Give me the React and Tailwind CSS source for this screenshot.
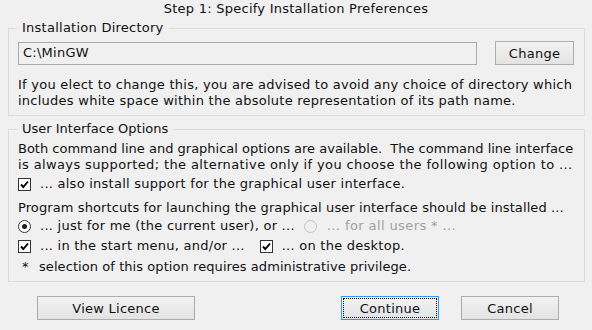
import { useState } from "react";

// kwadratowy checkbox w stylu Win32
function Check({ checked = true }) {
  return (
    <span className="inline-flex w-[13px] h-[13px] shrink-0 items-center justify-center border border-[#333333] bg-white">
      {checked && (
        <svg width="11" height="11" viewBox="0 0 11 11">
          <path d="M2 5.5 L4.3 8 L9 2.5" fill="none" stroke="#000" strokeWidth="1.9" />
        </svg>
      )}
    </span>
  );
}

function Radio({ checked, disabled }) {
  return (
    <span
      className={[
        "inline-flex w-[13px] h-[13px] shrink-0 items-center justify-center rounded-full border",
        disabled ? "border-[#c4c4c4] bg-[#f0f0f0]" : "border-[#333333] bg-white",
      ].join(" ")}
    >
      {checked && <span className="w-[5px] h-[5px] rounded-full bg-[#1a1a1a]" />}
    </span>
  );
}

function Button({ children, className = "", focused }) {
  return (
    <button
      className={[
        "h-[24px] flex items-center justify-center border bg-gradient-to-b from-[#f2f2f2] to-[#e3e3e3] text-[13px] leading-none",
        focused ? "border-[#3399ff] p-[1px]" : "border-[#adadad]",
        className,
      ].join(" ")}
    >
      {focused ? (
        <span className="w-full h-full flex items-center justify-center border border-dotted border-black">
          {children}
        </span>
      ) : (
        children
      )}
    </button>
  );
}

export default function App() {
  const [dir] = useState("C:\\MinGW");

  return (
    <div
      className="w-[592px] h-[330px] bg-[#f0f0f0] text-[#111] text-[13px] leading-[16px] tracking-[0.25px] overflow-hidden whitespace-nowrap"
      style={{ fontFamily: '"DejaVu Sans", Verdana, sans-serif' }}
    >
      <div className="h-[20px] pt-[1px] text-center">Step 1: Specify Installation Preferences</div>

      {/* Installation Directory */}
      <fieldset className="ml-[8px] mr-[7px] border border-[#dcdcdc] pl-[9px] pr-[10px] pb-[6px] min-w-0">
        <legend className="-ml-[1px] px-[5px] leading-[16px]">Installation Directory</legend>
        <div className="flex items-center justify-between mt-[5px]">
          <div className="w-[459px] h-[23px] border border-[#a9a9a9] bg-[#f0f0f0] flex items-center pl-[4px]">
            {dir}
          </div>
          <Button className="w-[79px]">Change</Button>
        </div>
        <p className="mt-[12px]">
          If you elect to change this, you are advised to avoid any choice of directory which
          <br />
          includes white space within the absolute representation of its path name.
        </p>
      </fieldset>

      {/* User Interface Options */}
      <fieldset className="mt-[5px] ml-[8px] mr-[7px] border border-[#dcdcdc] pl-[9px] pr-[4px] pb-[6px] min-w-0">
        <legend className="-ml-[1px] px-[5px] leading-[16px] tracking-[0px]">User Interface Options</legend>
        <div className="mt-[4px]">
          <div className="tracking-[0px]">
            Both command line and graphical options are available.&nbsp; The command line interface
          </div>
          <div className="tracking-[0.38px]">
            is always supported; the alternative only if you choose the following option to ...
          </div>
        </div>
        <div className="flex items-center gap-[9px] mt-[3px] h-[16px]">
          <Check />
          <span>... also install support for the graphical user interface.</span>
        </div>
        <p className="mt-[8px] tracking-[0.1px]">
          Program shortcuts for launching the graphical user interface should be installed ...
        </p>
        <div className="flex items-center mt-[2px] h-[16px]">
          <Radio checked />
          <span className="ml-[9px]">... just for me (the current user), or ...</span>
          <span className="ml-[9px] flex">
            <Radio disabled />
          </span>
          <span className="ml-[10px] text-[#a0a0a0] tracking-[0.4px]">... for all users * ...</span>
        </div>
        <div className="flex items-center mt-[4px] h-[16px]">
          <Check />
          <span className="ml-[9px]">... in the start menu, and/or ...</span>
          <span className="ml-[15px] flex">
            <Check />
          </span>
          <span className="ml-[9px]">... on the desktop.</span>
        </div>
        <div className="flex mt-[5px]">
          <span className="w-[21px] pl-[4px]">*</span>
          <span className="tracking-[0.07px]">selection of this option requires administrative privilege.</span>
        </div>
      </fieldset>

      <div className="flex mt-[14px]">
        <Button className="ml-[37px] w-[158px]">View Licence</Button>
        <Button focused className="ml-[146px] w-[98px]">
          Continue
        </Button>
        <Button className="ml-[22px] w-[98px]">Cancel</Button>
      </div>
    </div>
  );
}
